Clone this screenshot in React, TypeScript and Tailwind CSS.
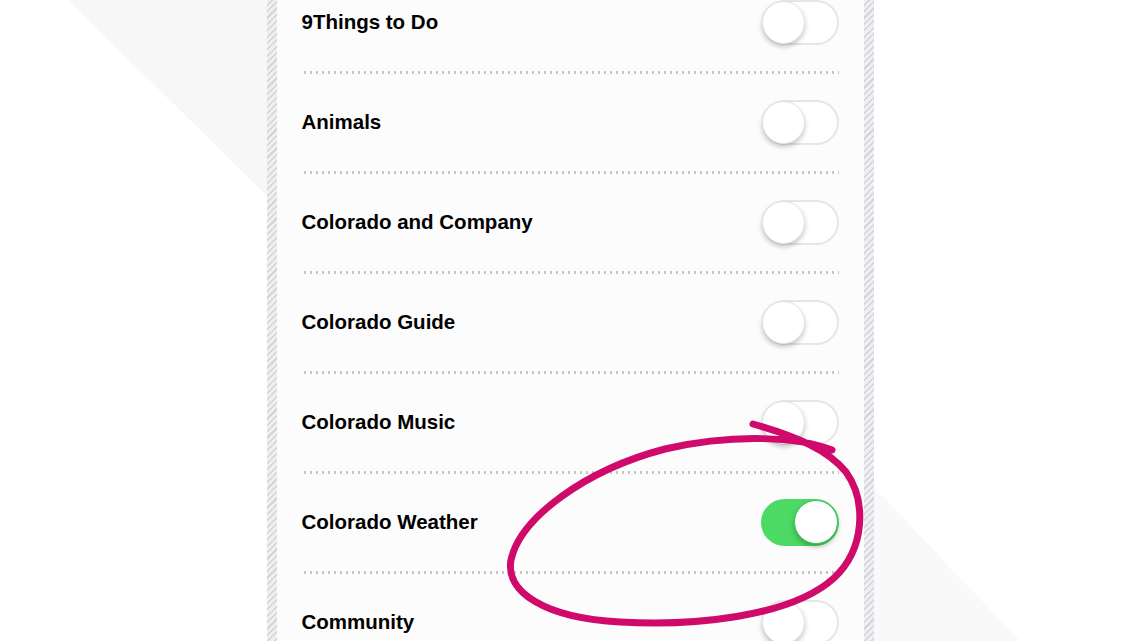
const topics = [
  { name: '9Things to Do', on: false },
  { name: 'Animals', on: false },
  { name: 'Colorado and Company', on: false },
  { name: 'Colorado Guide', on: false },
  { name: 'Colorado Music', on: false },
  { name: 'Colorado Weather', on: true },
  { name: 'Community', on: false },
];

function Toggle({ on }: { on: boolean }) {
  if (on) {
    return (
      <div className="w-[78px] h-[47px] rounded-full bg-[#4cd964] flex items-center justify-end pr-[1px] shrink-0">
        <div className="w-[44px] h-[44px] rounded-full bg-white border border-[#43c35a] shadow-[0_3px_5px_rgba(0,0,0,0.25)]" />
      </div>
    );
  }
  return (
    <div className="w-[77px] h-[45px] rounded-full bg-white border-2 border-[#e6e6e6] flex items-center shrink-0">
      <div className="w-[43px] h-[43px] -ml-[2px] rounded-full bg-white border border-[#e2e2e2] shadow-[0_3px_5px_rgba(0,0,0,0.22)]" />
    </div>
  );
}

function Hatch() {
  return (
    <div className="w-[10px] shrink-0 bg-[#eeeef2] bg-[repeating-linear-gradient(135deg,#efeff2_0px,#efeff2_3px,#d4d4dc_3px,#d4d4dc_4.5px)]" />
  );
}

export default function App() {
  return (
    <div className="relative w-[1140px] h-[641px] overflow-hidden bg-white font-['Liberation_Sans',Arial,sans-serif]">
      {/* background wedges */}
      <div className="absolute inset-0 bg-[#f7f7f7] [clip-path:polygon(68px_0,640px_0,640px_641px,266px_195px)]" />
      <div className="absolute inset-0 bg-[#f9f9fa] [clip-path:polygon(820px_430px,1020px_641px,820px_641px)]" />

      <div className="relative flex justify-center h-full">
        <div className="flex w-[607px] h-full">
          <Hatch />
          <div className="flex-1 bg-[#fcfcfc] px-[25px] overflow-hidden">
            <div className="-mt-[27px]">
              {topics.map((t) => (
                <div key={t.name} className="h-[100px] flex flex-col">
                  <div className="flex-1 flex items-center justify-between">
                    <span className="text-[20.5px] font-bold text-black">{t.name}</span>
                    <Toggle on={t.on} />
                  </div>
                  <div className="h-[3px] mb-[-1px] bg-[radial-gradient(circle,#c4c4c4_1.1px,transparent_1.5px)] bg-[length:6px_3px]" />
                </div>
              ))}
            </div>
          </div>
          <Hatch />
        </div>
      </div>

      {/* hand-drawn annotation */}
      <svg className="absolute inset-0 pointer-events-none" width="1140" height="641" viewBox="0 0 1140 641">
        <path
          d="M 753 424 C 798 437, 828 450, 846 472 C 866 500, 866 548, 834 578 C 790 618, 690 626, 620 622 C 545 618, 505 592, 511 560 C 520 518, 585 470, 665 449 C 735 433, 800 437, 832 450"
          fill="none"
          stroke="#cf0a6b"
          strokeWidth={7}
          strokeLinecap="round"
          strokeLinejoin="round"
        />
      </svg>
    </div>
  );
}
